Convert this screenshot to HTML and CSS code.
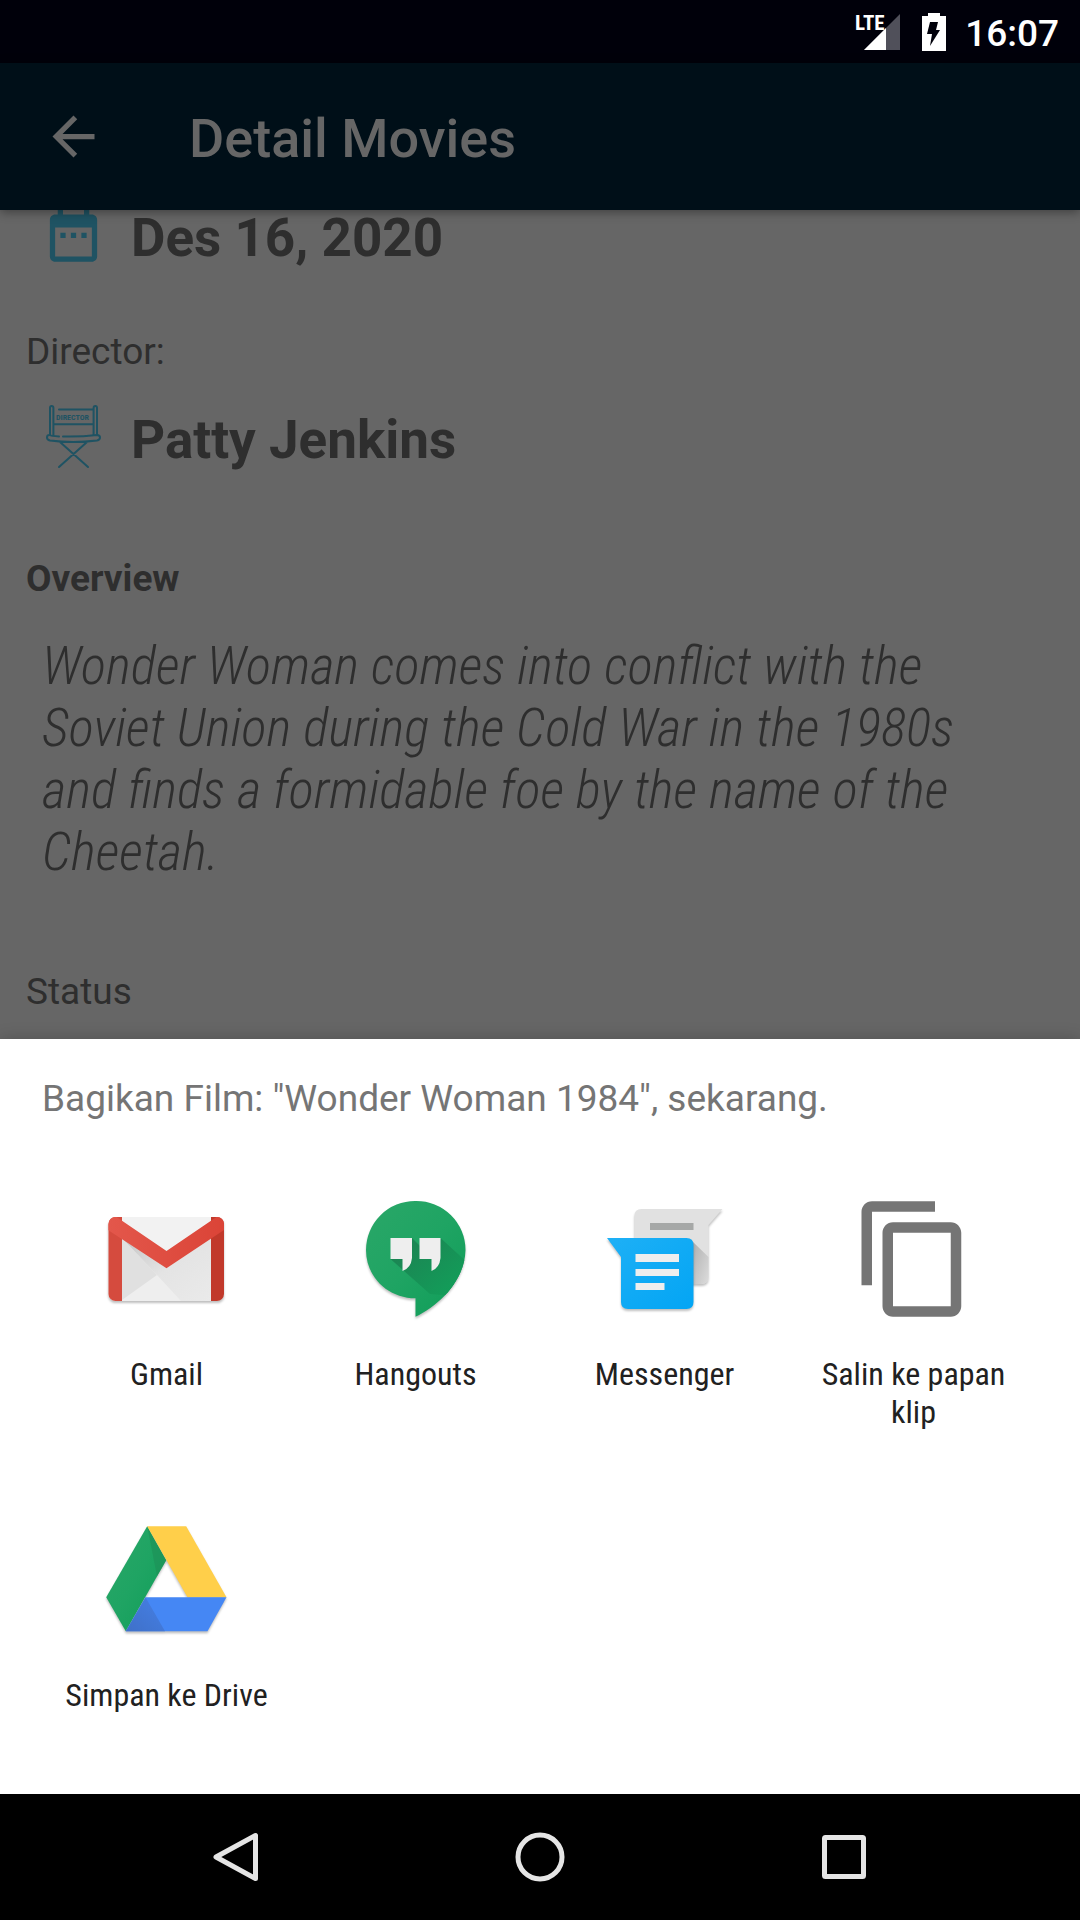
FILE: index.html
```html
<!DOCTYPE html>
<html lang="id">
<head>
<meta charset="utf-8">
<meta name="viewport" content="width=device-width, initial-scale=1">
<title>Detail Movies</title>
<link rel="stylesheet" href="styles.css">
</head>
<body>
<div class="status-bar">
  <svg class="signal" viewBox="0 0 46 38" aria-label="LTE">
    <path d="M45 1v36H9z" fill="#50505a"/>
    <path d="M31 15v22H9z" fill="#fff"/>
    <path d="M0 0h26v17H0z" fill="#00000a"/>
    <text class="lte" x="0" y="17">LTE</text>
  </svg>
  <svg class="battery" viewBox="0 0 24 38" aria-hidden="true">
    <path d="M6 0h12v3h6v35H0V3h6z" fill="#fff"/>
    <path d="M8 9h8l-2 8h4L8 33l2-12H5z" fill="#00000a"/>
  </svg>
  <time class="clock">16:07</time>
</div>

<header class="app-bar">
  <button class="icon-button" type="button" aria-label="Kembali">
    <svg class="icon" viewBox="0 0 24 24"><path fill="#666" d="M20 11H7.83l5.59-5.59L12 4l-8 8 8 8 1.41-1.41L7.83 13H20z"/></svg>
  </button>
  <h1 class="app-title">Detail Movies</h1>
</header>

<main class="details">
  <div class="fact fact-date">
    <svg class="icon-cut" viewBox="0 2.3 24 21.7" aria-hidden="true"><path fill="#1f5363" d="M9 11H7v2h2v-2zm4 0h-2v2h2v-2zm4 0h-2v2h2v-2zm2-7h-1V2h-2v2H8V2H6v2H5c-1.11 0-1.99.9-1.99 2L3 20c0 1.1.89 2 2 2h14c1.1 0 2-.9 2-2V6c0-1.100-.9-2-2-2zm0 16H5V9h14v11z"/></svg>
    <span class="fact-text">Des 16, 2020</span>
  </div>
  <h2 class="label label-director">Director:</h2>
  <div class="fact fact-director">
    <svg class="icon" viewBox="0 0 63 63" aria-hidden="true" fill="none" stroke="#1f5363" stroke-width="2" stroke-linecap="round">
      <path d="M8 30V3q0-2 1.700-2t1.700 2v27M51.600 30V3q0-2 1.700-2t1.700 2v27M17 4.500h34M12 19.300h39"/>
      <path d="M17 31.500Q9 31 7.500 30q-2.500 0-2.500 2.400T8 35.500q23 3 47 0 3-.6 3-3T55 30q-17 2-34 1.500M18 37l28 25M45 37L17 62"/>
      <text class="chair-text" x="14" y="15">DIRECTOR</text>
    </svg>
    <span class="fact-text">Patty Jenkins</span>
  </div>
  <h2 class="label label-overview">Overview</h2>
  <p class="overview">Wonder Woman comes into conflict with the Soviet Union during the Cold War in the 1980s and finds a formidable foe by the name of the Cheetah.</p>
  <h2 class="label label-status">Status</h2>
</main>

<section class="sheet" aria-labelledby="sheet-title">
  <h2 class="sheet-title" id="sheet-title">Bagikan Film: "Wonder Woman 1984", sekarang.</h2>
  <div class="targets">
    <button class="target" type="button">
      <svg class="target-icon" viewBox="0 0 126 126" aria-hidden="true">
        <defs>
          <clipPath id="envelope"><rect x="4.500" y="21" width="115.500" height="84" rx="7"/></clipPath>
          <linearGradient id="mail-red" x2="1"><stop stop-color="#e3574b"/><stop offset="1" stop-color="#db4437"/></linearGradient>
          <linearGradient id="fold" x1="0" y1="0" x2="1" y2="1"><stop stop-color="#c4c4c4"/><stop offset=".5" stop-color="#e4e4e4"/><stop offset="1" stop-color="#eaeaea"/></linearGradient>
        </defs>
        <g class="lift"><g clip-path="url(#envelope)">
          <path fill="#eee" d="M4 21h116v84H4z"/>
          <path fill="#e0e0e0" d="M18 42l35 37-35 25z"/>
          <path fill="url(#fold)" d="M18 42l45 30 44-30v63H77L53 79z"/>
          <path fill="#f2f2f2" d="M12 21h101L62.500 56z"/>
          <path fill="#d54b3e" d="M4 21h14v84H4z"/>
          <path fill="#c1392b" d="M107 21h13v84h-13z"/>
          <path fill="url(#mail-red)" d="M4 21h8.500l50 34 50-34h7.500v13L62.500 72.300 4 34z"/>
        </g></g>
      </svg>
      <span class="target-name">Gmail</span>
    </button>
    <button class="target" type="button">
      <svg class="target-icon" viewBox="0 0 126 126" aria-hidden="true">
        <defs>
          <linearGradient id="green" x2="1" y2="1"><stop stop-color="#2aa768"/><stop offset=".5" stop-color="#1fa463"/><stop offset="1" stop-color="#0f9d58"/></linearGradient>
          <linearGradient id="green-shade" gradientUnits="userSpaceOnUse" x1="50" y1="50" x2="92" y2="98"><stop stop-color="#1c8453"/><stop offset="1" stop-color="#139c59"/></linearGradient>
          <clipPath id="bubble"><path d="M62.500 5A49 49 0 0 0 13 54c0 27 22 48.300 49.500 48.300v18.400C86 110 112 84 112.500 54A49 49 0 0 0 62.500 5z"/></clipPath>
        </defs>
        <path class="lift" fill="url(#green)" d="M62.500 5A49 49 0 0 0 13 54c0 27 22 48.300 49.500 48.300v18.400C86 110 112 84 112.500 54A49 49 0 0 0 62.500 5z"/>
        <g clip-path="url(#bubble)" fill="url(#green-shade)"><path d="M59 42l29 29 24 30-35-3-39.500-35z"/><path d="M87.500 42L117 69l-20 32-18-26z"/></g>
        <path fill="#eee" d="M37.500 42H59v20q-1 10-9.500 13V63h-12zM66.500 42h21v20q-1 10-9 13V63h-12z"/>
      </svg>
      <span class="target-name">Hangouts</span>
    </button>
    <button class="target" type="button">
      <svg class="target-icon" viewBox="0 0 126 126" aria-hidden="true">
        <defs>
          <linearGradient id="grey-shade" x2="1" y2="1"><stop stop-color="#b0b0b0"/><stop offset="1" stop-color="#dcdcdc"/></linearGradient>
          <linearGradient id="blue" x2="1" y2="1"><stop stop-color="#1eb0f6"/><stop offset="1" stop-color="#03a5f4"/></linearGradient>
        </defs>
        <path class="lift" fill="#e1e1e1" d="M39.500 13h81l-14 16v52q0 7-7 7h-60q-7 0-7-7V20q0-7 7-7z"/>
        <path fill="url(#grey-shade)" d="M91 46l15.500 15v20q0 7-7 7H91z"/>
        <path fill="#a6a8a7" d="M48 27h43.500v7H48z"/>
        <path class="lift" fill="url(#blue)" d="M5 42h79.500q7 0 7 7v57q0 7-7 7H26q-7 0-7-7V61z"/>
        <path fill="#eee" d="M33.500 58H77v8H33.500zM33.500 73H77v7H33.500zM33.500 87h29v7h-29z"/>
      </svg>
      <span class="target-name">Messenger</span>
    </button>
    <button class="target" type="button">
      <svg class="target-icon" viewBox="0 0 24 24" aria-hidden="true"><path fill="#757575" d="M16 1H4c-1.100 0-2 .9-2 2v14h2V3h12V1zm3 4H8c-1.100 0-2 .9-2 2v14c0 1.100.9 2 2 2h11c1.100 0 2-.9 2-2V7c0-1.100-.9-2-2-2zm0 16H8V7h11v14z"/></svg>
      <span class="target-name">Salin ke papan klip</span>
    </button>
    <button class="target" type="button">
      <svg class="target-icon" viewBox="0 0 126 126" aria-hidden="true">
        <defs>
          <linearGradient id="drive-shade" x1="0" y1="1" x2="1" y2="0"><stop stop-color="#3f70c8"/><stop offset="1" stop-color="#4580e6"/></linearGradient>
        </defs>
        <g class="lift">
          <path fill="url(#green)" d="M43.200 9.300L62.200 43.300 21.800 114.300 2.200 80.300z"/>
          <path fill="#1e8f57" d="M43.200 9.300L62.200 43.300 53 59z" opacity=".6"/>
          <path fill="#ffcf4a" d="M43.200 9.300h39l40.300 71h-39z"/>
          <path fill="#4587f4" d="M41.500 80.300h81l-19 34H21.800z"/>
          <path fill="url(#drive-shade)" d="M41.500 80.300l19.500 34H21.800z"/>
        </g>
      </svg>
      <span class="target-name">Simpan ke Drive</span>
    </button>
  </div>
</section>

<nav class="nav-bar" aria-label="Navigasi sistem">
  <button class="nav-button" type="button" aria-label="Kembali"><svg class="nav-icon" viewBox="0 0 52 52"><path d="M45.500 4.500v43L6 26z"/></svg></button>
  <button class="nav-button" type="button" aria-label="Beranda"><svg class="nav-icon" viewBox="0 0 52 52"><circle cx="26" cy="26" r="22"/></svg></button>
  <button class="nav-button" type="button" aria-label="Terbaru"><svg class="nav-icon" viewBox="0 0 52 52"><rect x="6.500" y="6.500" width="39" height="39" rx="1"/></svg></button>
</nav>
</body>
</html>
```
FILE: styles.css
```css
* {
  box-sizing: border-box;
}

body {
  margin: 0;
  min-height: 100vh;
  display: flex;
  flex-direction: column;
  background: #666;
  color: #2e2e2e;
  font-family: Roboto, "Noto Sans", sans-serif;
}

h1,
h2,
p {
  margin: 0;
  font-weight: 400;
}

button {
  padding: 0;
  border: 0;
  background: none;
  color: inherit;
  font: inherit;
  cursor: pointer;
}

svg {
  display: block;
  flex: none;
  overflow: visible;
}

.icon {
  width: 63px;
  height: 63px;
}

/* Status bar */
.status-bar {
  display: flex;
  justify-content: flex-end;
  align-items: center;
  height: 63px;
  padding-right: 21px;
  background: #00000a;
  color: #fff;
}

.signal {
  width: 46px;
  height: 38px;
  margin-right: 21px;
}

.lte {
  fill: #fff;
  font: 700 21px "Roboto Condensed", Roboto, sans-serif;
}

.battery {
  width: 24px;
  height: 38px;
  margin-right: 19px;
}

.clock {
  padding-top: 4px;
  font-size: 37px;
  font-weight: 500;
  line-height: 44px;
}

/* App bar */
.app-bar {
  position: relative;
  display: flex;
  align-items: center;
  gap: 84px;
  height: 147px;
  padding: 0 42px;
  background: #000f18;
  color: #666;
  box-shadow: 0 2px 10px rgba(0, 0, 0, 0.4);
}

.app-title {
  padding-top: 4px;
  font-size: 54px;
  font-weight: 500;
  line-height: 62px;
}

/* Film details */
.details {
  flex: 1;
  padding: 0 26px 24px;
}

.fact {
  display: flex;
  align-items: flex-end;
  gap: 26px;
  padding-left: 16px;
}

.fact-date {
  align-items: flex-start;
  margin-bottom: 62px;
}

.icon-cut {
  width: 63px;
  height: 57px;
  overflow: hidden;
}

.fact-text {
  font-size: 53px;
  font-weight: 700;
  line-height: 56px;
}

.label {
  font-size: 37px;
  line-height: 46px;
}

.label-director {
  margin-bottom: 30px;
}

.fact-director {
  margin-bottom: 88px;
}

.chair-text {
  fill: #1f5363;
  stroke: none;
  font: 700 8px "Roboto Condensed", Roboto, sans-serif;
}

.label-overview {
  margin-bottom: 33px;
  font-weight: 700;
}

.overview {
  margin-bottom: 86px;
  padding: 0 16px;
  font-family: "Roboto Condensed", Roboto, sans-serif;
  font-size: 53px;
  font-style: italic;
  font-weight: 300;
  line-height: 62px;
}

/* Share sheet */
.sheet {
  padding: 37px 42px 80px;
  background: #fff;
  box-shadow: 0 0 16px rgba(0, 0, 0, 0.2);
}

.sheet-title {
  margin-bottom: 74px;
  color: #757575;
  font-size: 37px;
  line-height: 46px;
}

.targets {
  display: grid;
  grid-template-columns: repeat(4, 1fr);
  row-gap: 86px;
}

.target {
  display: flex;
  flex-direction: column;
  align-items: center;
  gap: 33px;
  padding: 0 16px;
  color: #212121;
}

.target-icon {
  width: 126px;
  height: 126px;
}

.lift {
  filter: drop-shadow(0 2px 1px rgba(0, 0, 0, 0.25));
}

.target-name {
  font-family: "Roboto Condensed", Roboto, sans-serif;
  font-size: 32px;
  line-height: 38px;
}

/* System navigation */
.nav-bar {
  display: grid;
  grid-template-columns: repeat(3, 1fr);
  height: 126px;
  padding: 0 84px;
  background: #000;
}

.nav-button {
  display: flex;
  align-items: center;
  justify-content: center;
}

.nav-icon {
  width: 52px;
  height: 52px;
  fill: none;
  stroke: #e5e5e5;
  stroke-width: 5;
  stroke-linejoin: round;
}
```
